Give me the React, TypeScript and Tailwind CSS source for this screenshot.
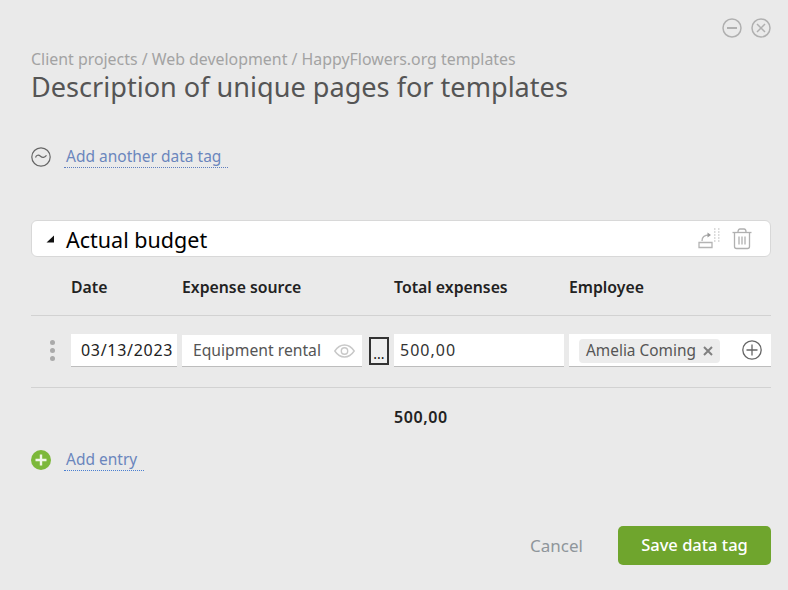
const font = { fontFamily: '"Noto Sans", sans-serif' };

function MinusIcon() {
  return (
    <svg width="20" height="20" viewBox="0 0 20 20" fill="none" stroke="#b0b0b0" strokeWidth="1.5">
      <circle cx="10" cy="10" r="9" />
      <path d="M5 10h10" strokeWidth="2" />
    </svg>
  );
}
function CloseIcon() {
  return (
    <svg width="20" height="20" viewBox="0 0 20 20" fill="none" stroke="#b0b0b0" strokeWidth="1.5">
      <circle cx="10" cy="10" r="9" />
      <path d="M6 6l8 8M14 6l-8 8" />
    </svg>
  );
}
function WaveIcon() {
  return (
    <svg width="20" height="20" viewBox="0 0 20 20" fill="none" stroke="#666" strokeWidth="1.2">
      <circle cx="10" cy="10" r="9.2" />
      <path d="M4.5 10.5c1-2.5 3-3 5-1.2s4 1.500 6-1" />
    </svg>
  );
}
function MoveIcon() {
  return (
    <svg width="24" height="22" viewBox="0 0 24 22" fill="none" stroke="#b4b4b4" strokeWidth="1.3">
      <path d="M1 14.5h13v5H1z" />
      <path d="M4 13c0-4 2-6 7-6" />
      <path d="M9.5 4.5l3.5 2.5-3.5 2.5z" fill="#999" stroke="none" />
      <path d="M16 1h1.5M20 1h1.5M16 4h1.5M20 4h1.5M16 7h1.5M20 7h1.5M16 10h1.5M20 10h1.5M16 13h1.5M20 13h1.5" strokeWidth="1.4" stroke="#d0d0d0" />
    </svg>
  );
}
function TrashIcon() {
  return (
    <svg width="20" height="22" viewBox="0 0 20 22" fill="none" stroke="#b0b0b0" strokeWidth="1.3">
      <path d="M0.5 4.5h19" />
      <path d="M6 4c0-2 1-3 2-3h4c1 0 2 1 2 3" />
      <path d="M2.5 5v13.5c0 1.2 .8 2 2 2h11c1.200 0 2-.8 2-2V5" />
      <path d="M7 8.500v8M10 8.500v8M13 8.500v8" />
    </svg>
  );
}
function EyeIcon() {
  return (
    <svg width="21" height="14" viewBox="0 0 21 14" fill="none" stroke="#c8c8c8" strokeWidth="1.4">
      <path d="M.8 7C3.500 3 6.500 1 10.500 1s7 2 9.700 6c-2.700 4-5.700 6-9.700 6S3.500 11 .8 7z" />
      <circle cx="10.500" cy="7" r="3.200" />
    </svg>
  );
}
function PlusCircle() {
  return (
    <svg width="20" height="20" viewBox="0 0 20 20" fill="none" stroke="#666" strokeWidth="1.300">
      <circle cx="10" cy="10" r="9.200" />
      <path d="M10 4.500v11M4.500 10h11" />
    </svg>
  );
}
function GreenPlus() {
  return (
    <svg width="20" height="20" viewBox="0 0 20 20">
      <circle cx="10" cy="10" r="10" fill="#7cb83a" />
      <path d="M10 4.500v11M4.500 10h11" stroke="#f0f6e8" strokeWidth="2.400" />
    </svg>
  );
}
function Caret() {
  return (
    <svg width="8" height="8" viewBox="0 0 8 8">
      <path d="M8 0.500V7.500H0.500z" fill="#111" />
    </svg>
  );
}
function SmallX() {
  return (
    <svg width="10" height="10" viewBox="0 0 10 10" fill="none" stroke="#808080" strokeWidth="2">
      <path d="M1 1l8 8M9 1l-8 8" />
    </svg>
  );
}

export default function App() {
  return (
    <div style={font} className="w-[788px] h-[590px] overflow-hidden bg-[#eaeaea] pl-[31px] pr-[17px] pt-[18px] flex flex-col">
      <div className="flex justify-end gap-[9px] h-[20px]">
        <MinusIcon />
        <CloseIcon />
      </div>

      <div className="mt-[11px] text-[15.9px] leading-[20px] text-[#a3a3a3] whitespace-nowrap">
        Client projects / Web development / HappyFlowers.org templates
      </div>
      <h1 className="mt-[2px] text-[27.100px] leading-[32px] text-[#555] font-normal whitespace-nowrap">
        Description of unique pages for templates
      </h1>

      <div className="mt-[43px] flex items-center h-[22px]">
        <WaveIcon />
        <span className="ml-[13px] pl-[2px] pr-[7px] text-[15.500px] leading-[21px] text-[#6b86bd] border-b border-dotted border-[#5f7fbf]">
          Add another data tag
        </span>
      </div>

      <div className="mt-[52px] h-[37px] bg-white rounded-[6px] border border-[#d8d8d8] flex items-center pl-[14px] pr-[18px]">
        <Caret />
        <span className="ml-[12px] pt-[2px] text-[21.500px] leading-[30px] text-black">Actual budget</span>
        <span className="ml-auto flex items-center gap-[10px]">
          <MoveIcon />
          <TrashIcon />
        </span>
      </div>

      <div className="mt-[20px] h-[20px] grid grid-cols-[40px_111px_212px_175px_1fr] items-center text-[15.800px] leading-[20px] font-semibold text-[#222]">
        <span />
        <span>Date</span>
        <span>Expense source</span>
        <span>Total expenses</span>
        <span>Employee</span>
      </div>

      <div className="mt-[18px] border-t border-[#d2d2d2] h-[72px] flex items-start pt-[18px]">
        <div className="w-[40px] pl-[19px] pt-[6px] flex flex-col gap-[3px]">
          <span className="w-[5px] h-[5px] rounded-full bg-[#aaa]" />
          <span className="w-[5px] h-[5px] rounded-full bg-[#aaa]" />
          <span className="w-[5px] h-[5px] rounded-full bg-[#aaa]" />
        </div>
        <div className="w-[106px] h-[33px] bg-white border-b border-[#bdbdbd] flex items-center pl-[10px] text-[16px] tracking-[0.7px] text-[#222]">
          03/13/2023
        </div>
        <div className="ml-[5px] w-[180px] h-[32px] mt-[1px] bg-white border-b border-[#bdbdbd] flex items-center pl-[11px] pr-[7px] text-[15.700px] text-[#555] whitespace-nowrap">
          Equipment rental
          <span className="ml-auto"><EyeIcon /></span>
        </div>
        <button className="ml-[7px] mt-[3px] w-[20px] h-[28px] bg-[#efefef] border-2 border-[#333] flex items-end justify-center text-[14px] leading-[18px] text-[#111]">
          ...
        </button>
        <div className="ml-[5px] w-[170px] h-[33px] bg-white border-b border-[#bdbdbd] flex items-center pl-[6px] text-[16px] tracking-[1px] text-[#333]">
          500,00
        </div>
        <div className="ml-[5px] flex-1 h-[33px] bg-white border-b border-[#bdbdbd] flex items-center pl-[10px] pr-[9px]">
          <span className="mt-[1px] h-[24px] pl-[7px] pr-[7px] rounded-[4px] bg-[#ececec] flex items-center text-[15.400px] text-[#555] whitespace-nowrap">
            Amelia Coming
            <span className="ml-[7px]"><SmallX /></span>
          </span>
          <span className="ml-auto"><PlusCircle /></span>
        </div>
      </div>

      <div className="border-t border-[#d2d2d2] h-[62px] pl-[363px] pt-[19px] text-[16px] tracking-[0.6px] leading-[20px] font-semibold text-[#222]">
        500,00
      </div>

      <div className="flex items-center h-[22px]">
        <GreenPlus />
        <span className="ml-[13px] pl-[2px] pr-[7px] text-[15.500px] leading-[21px] text-[#6b86bd] border-b border-dotted border-[#4a7fd0]">
          Add entry
        </span>
      </div>

      <div className="mt-[55px] flex items-center justify-end">
        <span className="text-[17px] text-[#8f969b] mr-[35px]">Cancel</span>
        <button className="w-[153px] h-[39px] rounded-[5px] bg-[#6fa52d] text-white text-[16.500px] font-medium">
          Save data tag
        </button>
      </div>
    </div>
  );
}
